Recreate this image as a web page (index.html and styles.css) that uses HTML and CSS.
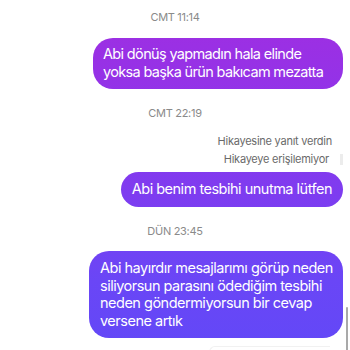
FILE: index.html
```html
<!DOCTYPE html>
<html lang="tr">
<head>
    <meta charset="UTF-8">
    <meta name="viewport" content="width=device-width, initial-scale=1.0">
    <title>Mesajlar</title>
    <link rel="stylesheet" href="styles.css">
</head>
<body>
    <div class="thread">
        <div class="time first">CMT 11:14</div>
        <div class="bubble b1">Abi dönüş yapmadın hala elinde yoksa başka ürün bakıcam mezatta</div>

        <div class="time">CMT 22:19</div>
        <div class="story">
            <div class="story-note">Hikayesine yanıt verdin</div>
            <div class="story-row">
                <span class="story-note">Hikayeye erişilemiyor</span>
                <span class="story-edge"></span>
            </div>
        </div>
        <div class="bubble b3">Abi benim tesbihi unutma lütfen</div>

        <div class="time">DÜN 23:45</div>
        <div class="bubble b4">Abi hayırdır mesajlarımı görüp neden siliyorsun parasını ödediğim tesbihi neden göndermiyorsun bir cevap versene artık</div>
        <div class="next-item"></div>
    </div>
    <div class="scrollbar"></div>
</body>
</html>
```

FILE: styles.css
```css
body {
    margin: 0;
    background: #fff;
    font-family: Inter, "Noto Sans", sans-serif;
    overflow: hidden;
}

.thread {
    display: flex;
    flex-direction: column;
    align-items: flex-end;
    padding: 0 7px 0 0;
}

.time {
    align-self: center;
    font-size: 11px;
    line-height: 14px;
    letter-spacing: -0.3px;
    color: #8a8a8a;
    margin-top: 17px;
    margin-bottom: 13px;
    padding-left: 7px;
}

.time.first {
    margin-top: 10px;
    margin-bottom: 14px;
}

.bubble {
    background: linear-gradient(180deg, #a22de0 0%, #8a36ec 40%, #6a46f6 80%, #6248f7 100%);
    background-attachment: fixed;
    color: #fff;
    font-size: 14.5px;
    line-height: 18px;
    letter-spacing: -0.5px;
    padding: 7px 11px;
    border-radius: 20px;
    box-sizing: border-box;
}

.b1 {
    max-width: 250px;
    padding: 7px 10px 8px;
    letter-spacing: -0.65px;
}

.b3 {
    border-radius: 18px;
    padding: 8px 11px 9px;
}

.b4 {
    width: 254px;
    padding: 8px 10px 9px 11px;
    line-height: 17.5px;
}

.story {
    display: flex;
    flex-direction: column;
    align-items: flex-end;
    gap: 4px;
    margin-top: 1px;
    margin-bottom: 6px;
}

.story-row {
    display: flex;
    align-items: center;
    gap: 11px;
    margin-right: -7px;
}

.story-note {
    font-size: 11px;
    line-height: 14px;
    letter-spacing: -0.25px;
    color: #6a6a6a;
    margin-right: 11px;
}

.story-row .story-note {
    margin-right: 0;
}

.story-edge {
    width: 3px;
    height: 11px;
    background: #ececec;
    margin-right: 7px;
}

.next-item {
    width: 120px;
    height: 8px;
    margin-top: 8px;
    margin-right: 13px;
    border-top: 1px solid #f1f1f1;
    border-left: 1px solid #f1f1f1;
    border-radius: 6px 0 0 0;
}

.scrollbar {
    position: fixed;
    right: 2px;
    top: 307px;
    width: 2px;
    height: 50px;
    background: #a9a9a9;
    border-radius: 1px;
}
```
